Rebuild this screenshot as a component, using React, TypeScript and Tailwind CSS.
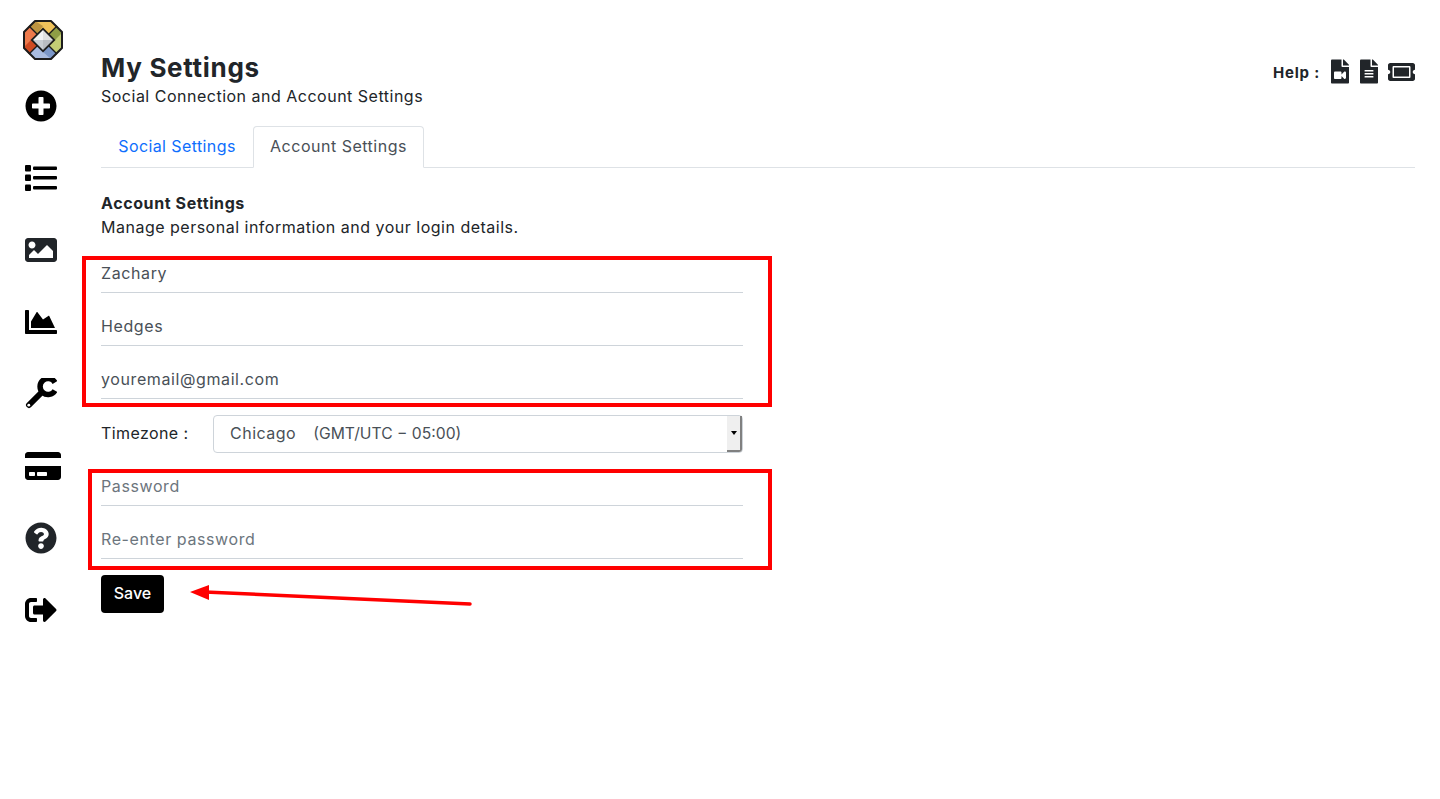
import React from 'react';
import {
  FaPlusCircle,
  FaImage,
  FaChartArea,
  FaCreditCard,
  FaQuestionCircle,
  FaSignOutAlt,
  FaFileVideo,
  FaFileAlt,
  FaTicketAlt,
} from 'react-icons/fa';

const Logo = () => (
  <svg width="42" height="42" viewBox="0 0 42 42" className="block">
    {/* top */}
    <path d="M13 2 L29 2 L35 7 L21 21 L7 7 Z" fill="#efc25a" />
    <path d="M13 2 L7 7 L15 15 L21 7 Z" fill="#bd9440" />
    {/* right */}
    <path d="M40 13 L40 29 L35 35 L21 21 L35 7 Z" fill="#c3cd75" />
    <path d="M35 7 L27 15 L33 21 L40 14 Z" fill="#8f9e45" />
    {/* bottom */}
    <path d="M29 40 L13 40 L7 35 L21 21 L35 35 Z" fill="#a9bce0" />
    <path d="M35 35 L27 27 L21 33 L29 40 Z" fill="#7b97c8" />
    {/* left */}
    <path d="M2 29 L2 13 L7 7 L21 21 L7 35 Z" fill="#ee7a4c" />
    <path d="M7 35 L15 27 L9 21 L2 28 Z" fill="#cf4a22" />
    <path d="M7 7 L35 35 M35 7 L7 35" stroke="#1c1c1c" strokeWidth="1.4" />
    <path d="M13 2 L29 2 L40 13 L40 29 L29 40 L13 40 L2 29 L2 13 Z" fill="none" stroke="#1c1c1c" strokeWidth="2" strokeLinejoin="round" />
    <path d="M21 8.5 L33.5 21 L21 33.5 L8.5 21 Z" fill="#1c1c1c" />
    <path d="M21 11 L31 21 L21 21 L11 21 Z" fill="#f2f3f4" />
    <path d="M11 21 L31 21 L21 31 Z" fill="#c9cdd3" />
    <path d="M21 11 L31 21 L21 31 Z" fill="#000000" fillOpacity="0.08" />
  </svg>
);

const ListIcon = () => (
  <svg width="32" height="32" viewBox="0 0 32 32" fill="currentColor" className="text-black">
    <rect x="0" y="3" width="6" height="6.5" rx="1" />
    <rect x="8" y="4.5" width="24" height="3.5" rx="1" />
    <rect x="0" y="12.5" width="6" height="6.5" rx="1" />
    <rect x="8" y="14" width="24" height="3.5" rx="1" />
    <rect x="0" y="22.5" width="6" height="6.5" rx="1" />
    <rect x="8" y="24" width="24" height="3.5" rx="1" />
  </svg>
);

const WrenchIcon = () => (
  <svg width="32" height="32" viewBox="0 0 32 32" className="text-black">
    <path d="M30 4.5 A8 8 0 1 0 30 12.5" fill="none" stroke="currentColor" strokeWidth="5.5" />
    <path d="M16.5 14.5 L4 27" fill="none" stroke="currentColor" strokeWidth="6" strokeLinecap="round" />
    <circle cx="3.8" cy="27.2" r="1.4" fill="#ffffff" />
  </svg>
);

const navIcons: { node: React.ReactNode }[] = [
  { node: <FaPlusCircle size={32} className="text-black" /> },
  { node: <ListIcon /> },
  { node: <FaImage size={32} className="text-[#212529]" /> },
  { node: <FaChartArea size={32} className="text-black" /> },
  { node: <WrenchIcon /> },
  { node: <FaCreditCard size={36} className="text-black ml-[4px] shrink-0" /> },
  { node: <FaQuestionCircle size={32} className="text-[#212529]" /> },
  { node: <FaSignOutAlt size={32} className="text-black" /> },
];

const Field = ({ value, placeholder }: { value?: string; placeholder?: string }) => (
  <input
    readOnly
    value={value}
    placeholder={placeholder}
    className="block w-full h-[38px] pb-[2px] border-b border-[#ced4da] bg-white text-[16px] tracking-[0.6px] text-[#495057] placeholder:text-[#6c757d] outline-none"
  />
);

export default function App() {
  return (
    <div className="relative min-h-[799px] bg-white text-[#212529] font-['Inter','Liberation_Sans',sans-serif]">
      <div className="flex">
        <aside className="w-[82px] shrink-0 flex flex-col items-center pt-[19px]">
          <div className="h-[42px] pl-1">
            <Logo />
          </div>
          <div className="flex flex-col items-center">
            {navIcons.map(({ node }, i) => (
              <div key={i} className="h-[72px] w-[36px] flex items-center justify-center first:mt-[9px]">
                {node}
              </div>
            ))}
          </div>
        </aside>

        <main className="flex-1 pl-[19px] pr-[25px] pt-[52px]">
          <div className="flex items-start justify-between">
            <div>
              <h1 className="text-[26px] leading-[31px] font-bold tracking-[0.7px] text-[#212529]">My Settings</h1>
              <p className="text-[16px] leading-[26px] mb-[2px] tracking-[0.5px]">Social Connection and Account Settings</p>
            </div>
            <div className="flex items-center gap-[11px] pt-[4px]">
              <span className="pt-[4px] text-[15px] font-bold tracking-[0.8px]">Help :</span>
              <FaFileVideo size={25} className="w-[18px]" />
              <FaFileAlt size={25} className="w-[18px]" />
              <FaTicketAlt size={28} className="w-[27px] ml-[-1px] mt-[2px]" />
            </div>
          </div>

          <div className="mt-[15px] flex h-[42px] border-b border-[#dee2e6] text-[16px] tracking-[0.4px]">
            <button className="w-[152px] pb-[2px] text-[#0d6efd]">Social Settings</button>
            <button className="w-[171px] pb-[2px] bg-white border border-[#dee2e6] border-b-white rounded-t-[4px] h-[42px] text-[#495057] tracking-[0.5px]">
              Account Settings
            </button>
          </div>

          <div className="max-w-[642px]">
            <h2 className="mt-[23px] text-[16px] leading-[24px] font-bold tracking-[0.6px]">Account Settings</h2>
            <p className="text-[16px] leading-[24px] tracking-[0.5px]">Manage personal information and your login details.</p>

            <div className="mt-[16px] flex flex-col gap-[15px]">
              <Field value="Zachary" />
              <Field value="Hedges" />
              <Field value="youremail@gmail.com" />

              <div className="flex items-center h-[38px] mt-[1px]">
                <span className="w-[112px] pb-[2px] text-[16px] tracking-[0.4px]">Timezone :</span>
                <div className="flex-1 flex h-[38px] rounded-[4px] border border-[#ced4da] text-[16px] text-[#495057]">
                  <div className="flex-1 flex items-center pl-[16px]">
                    <div className="flex items-baseline gap-[17px] pb-[1px]">
                      <span className="tracking-[0.5px]">Chicago</span>
                      <span className="text-[15.7px]">(GMT/UTC − 05:00)</span>
                    </div>
                  </div>
                  <div className="w-[15px] flex items-center justify-center bg-[#efefef] border-r-2 border-b-2 border-[#808080] rounded-br-[3px]">
                    <span className="block w-0 h-0 border-x-[3px] border-x-transparent border-t-[4px] border-t-black" />
                  </div>
                </div>
              </div>

              <Field placeholder="Password" />
              <Field placeholder="Re-enter password" />
            </div>

            <button className="mt-[16px] h-[38px] w-[63px] pb-[2px] rounded-[4px] bg-black text-white text-[16px] font-medium">
              Save
            </button>
          </div>
        </main>
      </div>

      {/* annotations drawn over the screenshot */}
      <div className="absolute left-[82px] top-[256px] w-[690px] h-[151px] border-[4px] border-[#ff0000]" />
      <div className="absolute left-[88px] top-[469px] w-[684px] h-[101px] border-[4px] border-[#ff0000]" />
      <svg className="absolute left-[185px] top-[580px]" width="290" height="30" viewBox="0 0 290 30">
        <path d="M20 12 L285 24" stroke="#ff0000" strokeWidth="3.5" strokeLinecap="round" />
        <path d="M5 12 L24 5 L24 20 Z" fill="#ff0000" />
      </svg>
    </div>
  );
}
